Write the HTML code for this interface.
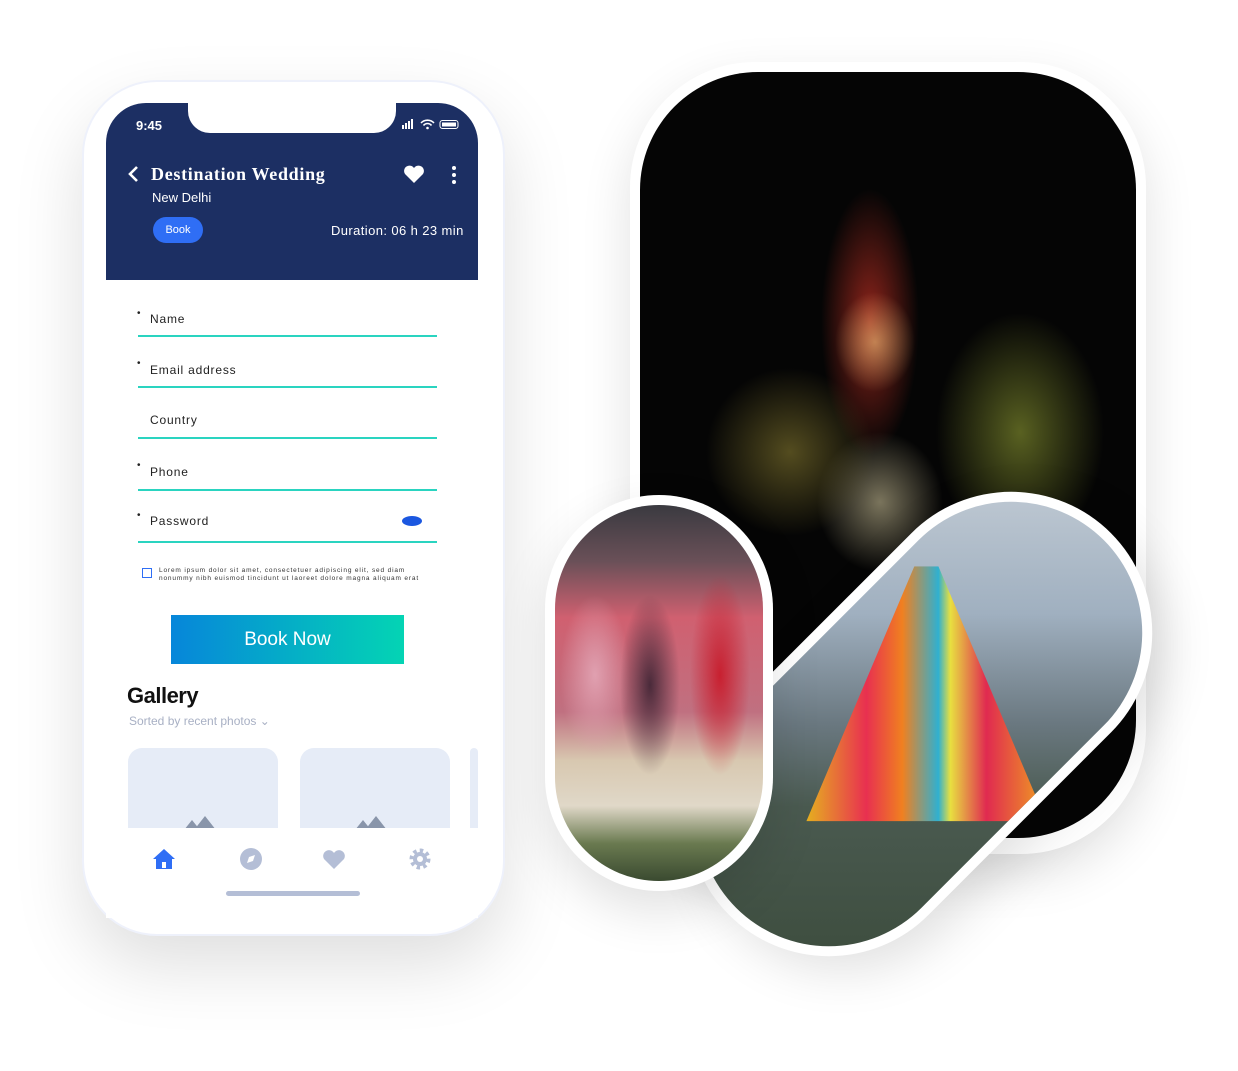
<!DOCTYPE html>
<html><head><meta charset="utf-8"><style>
*{margin:0;padding:0;box-sizing:border-box}
body{width:1238px;height:1071px;background:#fff;position:relative;overflow:hidden;font-family:"Liberation Sans",sans-serif}
.abs{position:absolute}
.phone{left:82px;top:80px;width:423px;height:856px;border-radius:75px;background:#fff;border:2px solid #eef1fb;box-shadow:0 30px 70px rgba(0,0,0,.13)}
.hdr{left:106px;top:103px;width:372px;height:177px;background:#1c2f63;border-radius:40px 40px 0 0}
.notch{left:188px;top:100px;width:208px;height:33px;background:#fff;border-radius:0 0 22px 22px}
.w{color:#fff}
.lbl{left:150px;font-size:12px;color:#222;letter-spacing:.8px}
.ln{left:138px;width:299px;height:2px;background:#2ad4c0}
.dot{left:137px;font-size:10px;color:#222}
.card{top:748px;width:150px;height:90px;background:#e6ecf7;border-radius:14px 14px 0 0}
</style></head><body>
<div class="abs phone"></div>
<div class="abs hdr"></div>
<div class="abs notch"></div>
<div class="abs w" style="left:136px;top:118px;font-size:13px;font-weight:bold">9:45</div>
<svg class="abs" style="left:400px;top:118px" width="62" height="14"><rect x="2" y="7" width="2" height="4" fill="#fff"/><rect x="5" y="5" width="2" height="6" fill="#fff"/><rect x="8" y="3" width="2" height="8" fill="#fff"/><rect x="11" y="1" width="2" height="10" fill="#fff"/><path d="M21 5a9 9 0 0 1 13 0M23.5 7.5a5 5 0 0 1 8 0" stroke="#fff" stroke-width="1.6" fill="none"/><circle cx="27.5" cy="10" r="1.3" fill="#fff"/><rect x="40" y="2.5" width="18" height="8" rx="2.5" stroke="#fff" fill="none"/><rect x="42" y="4.5" width="14" height="4" fill="#fff"/></svg>
<svg class="abs" style="left:126px;top:165px" width="14" height="18"><path d="M11 2L4 9l7 7" stroke="#fff" stroke-width="2.6" fill="none"/></svg>
<div class="abs w" style="left:151px;top:164px;font-family:'Liberation Serif',serif;font-weight:bold;font-size:18px;letter-spacing:.7px">Destination Wedding</div>
<svg class="abs" style="left:403px;top:164px" width="22" height="20"><path d="M11 19L2 10a5 5 0 0 1 9-6 5 5 0 0 1 9 6z" fill="#fff"/></svg>
<svg class="abs" style="left:450px;top:165px" width="8" height="20"><circle cx="4" cy="3" r="2" fill="#fff"/><circle cx="4" cy="10" r="2" fill="#fff"/><circle cx="4" cy="17" r="2" fill="#fff"/></svg>
<div class="abs w" style="left:152px;top:190px;font-size:13px">New Delhi</div>
<div class="abs w" style="left:153px;top:217px;width:50px;height:26px;border-radius:13px;background:#2f6ef5;font-size:11px;text-align:center;line-height:26px">Book</div>
<div class="abs w" style="left:331px;top:223px;font-size:13px;letter-spacing:.4px">Duration: 06 h 23 min</div>

<div class="abs dot" style="top:308px">•</div><div class="abs lbl" style="top:312px">Name</div><div class="abs ln" style="top:335px"></div>
<div class="abs dot" style="top:358px">•</div><div class="abs lbl" style="top:363px">Email address</div><div class="abs ln" style="top:386px"></div>
<div class="abs lbl" style="top:413px">Country</div><div class="abs ln" style="top:437px"></div>
<div class="abs dot" style="top:460px">•</div><div class="abs lbl" style="top:465px">Phone</div><div class="abs ln" style="top:489px"></div>
<div class="abs dot" style="top:510px">•</div><div class="abs lbl" style="top:514px">Password</div><div class="abs ln" style="top:541px"></div>
<div class="abs" style="left:402px;top:516px;width:20px;height:10px;border-radius:50%;background:#1b57e0"></div>
<div class="abs" style="left:142px;top:568px;width:10px;height:10px;border:1.5px solid #2f6ef5"></div>
<div class="abs" style="left:159px;top:567px;font-size:6.5px;color:#333;line-height:8px;letter-spacing:.85px">Lorem ipsum dolor sit amet, consectetuer adipiscing elit, sed diam<br>nonummy nibh euismod tincidunt ut laoreet dolore magna aliquam erat</div>
<div class="abs w" style="left:171px;top:615px;width:233px;height:49px;background:linear-gradient(90deg,#0686da,#04d4b4);text-align:center;line-height:49px;font-size:19px">Book Now</div>
<div class="abs" style="left:127px;top:683px;font-size:22px;font-weight:bold;color:#111;letter-spacing:-.5px">Gallery</div>
<div class="abs" style="left:129px;top:714px;font-size:12px;color:#a8b0c4">Sorted by recent photos ⌄</div>
<div class="abs card" style="left:128px"></div>
<div class="abs card" style="left:300px"></div>
<div class="abs card" style="left:470px;width:8px"></div>
<svg class="abs" style="left:184px;top:808px" width="40" height="22"><path d="M0 22l8-10 8 10zM10 22l11-14 11 14z" fill="#8995aa"/></svg>
<svg class="abs" style="left:355px;top:808px" width="40" height="22"><path d="M0 22l8-10 8 10zM10 22l11-14 11 14z" fill="#8995aa"/></svg>
<div class="abs" style="left:106px;top:828px;width:372px;height:90px;background:#fff"></div>
<svg class="abs" style="left:152px;top:847px" width="24" height="24"><path d="M12 2L1 12h3v10h16V12h3z" fill="#2f6ef5"/><rect x="10" y="15" width="4" height="6" fill="#fff"/></svg>
<svg class="abs" style="left:239px;top:847px" width="24" height="24"><circle cx="12" cy="12" r="11" fill="#b4bed6"/><path d="M16 8l-6 2-2 6 6-2z" fill="#fff"/></svg>
<svg class="abs" style="left:322px;top:848px" width="24" height="22"><path d="M12 21L2 11a5.5 5.5 0 0 1 10-6 5.5 5.5 0 0 1 10 6z" fill="#b4bed6"/></svg>
<svg class="abs" style="left:408px;top:847px" width="24" height="24"><circle cx="12" cy="12" r="8" fill="none" stroke="#b4bed6" stroke-width="5" stroke-dasharray="3.2 3"/><circle cx="12" cy="12" r="7" fill="#b4bed6"/><circle cx="12" cy="12" r="3" fill="#fff"/></svg>
<div class="abs" style="left:226px;top:891px;width:134px;height:5px;border-radius:3px;background:#b4bed6"></div>

<!-- big photo -->
<div class="abs" style="left:630px;top:62px;width:516px;height:792px;border-radius:125px;background:#fff;box-shadow:0 20px 50px rgba(0,0,0,.12)"></div>
<div class="abs" style="left:640px;top:72px;width:496px;height:766px;border-radius:118px;background:
radial-gradient(ellipse 40px 50px at 235px 270px,rgba(255,210,130,.55),transparent),
radial-gradient(ellipse 70px 190px at 230px 250px,rgba(160,40,30,.9),transparent 70%),
radial-gradient(ellipse 120px 120px at 150px 380px,rgba(110,100,40,.75),transparent 70%),
radial-gradient(ellipse 120px 170px at 380px 360px,rgba(110,120,40,.8),transparent 70%),
radial-gradient(ellipse 90px 100px at 240px 430px,rgba(200,190,150,.6),transparent 70%),
#050505"></div>
<!-- diagonal -->
<div class="abs" style="left:650px;top:583px;width:540px;height:282px;border-radius:141px;background:#fff;transform:rotate(-45deg);box-shadow:0 20px 50px rgba(0,0,0,.12)"></div>
<div class="abs" style="left:660px;top:593px;width:520px;height:262px;border-radius:131px;transform:rotate(-45deg);overflow:hidden;background:linear-gradient(45deg,#3a4a3a 0%,#4a5a50 35%,#6a7880 50%,#a0b0c0 70%,#c8d0d8 100%)">
<div class="abs" style="left:150px;top:-20px;width:240px;height:300px;transform:rotate(45deg);clip-path:polygon(45% 0,55% 0,100% 85%,0 85%);background:linear-gradient(90deg,#e6b020,#e83050 25%,#f08020 40%,#30b0d0 55%,#e8e040 60%,#e02a50 75%,#f0a020)"></div>
</div>
<!-- left pill -->
<div class="abs" style="left:545px;top:495px;width:228px;height:396px;border-radius:114px;background:#fff;box-shadow:0 20px 50px rgba(0,0,0,.12)"></div>
<div class="abs" style="left:555px;top:505px;width:208px;height:376px;border-radius:104px;background:
radial-gradient(ellipse 30px 100px at 165px 170px,#c82030,transparent),
radial-gradient(ellipse 30px 90px at 95px 180px,#4a2a3a,transparent),
radial-gradient(ellipse 35px 80px at 40px 170px,#e0a0b0,transparent),
linear-gradient(180deg,#3a3a40 0%,#6a5058 15%,#d06070 30%,#c07080 55%,#d8c8b0 68%,#e0d8c8 80%,#6a7a50 90%,#3a4a30 100%)"></div>
</body></html>
